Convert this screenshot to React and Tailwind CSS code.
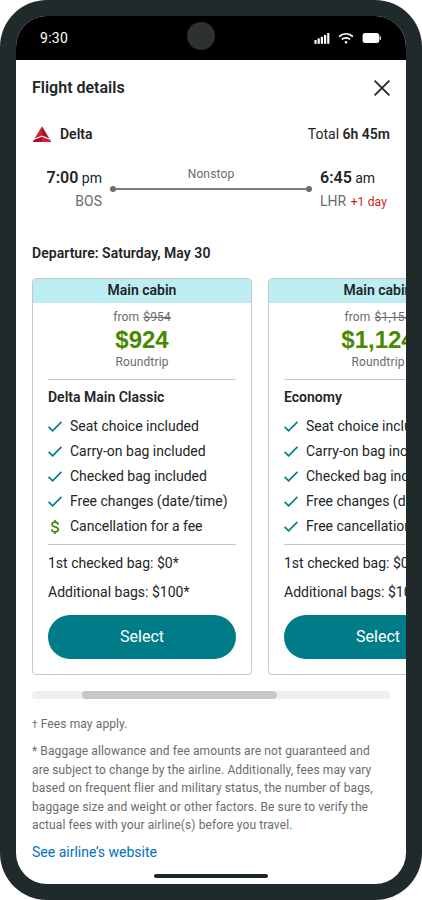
const FARES = [
  {
    id: 'main-classic',
    cabin: 'Main cabin',
    oldPrice: '$954',
    price: '$924',
    name: 'Delta Main Classic',
    features: [
      { text: 'Seat choice included' },
      { text: 'Carry-on bag included' },
      { text: 'Checked bag included' },
      { text: 'Free changes (date/time)' },
      { text: 'Cancellation for a fee', fee: true },
    ],
    bags: ['1st checked bag: $0*', 'Additional bags: $100*'],
  },
  {
    id: 'economy',
    cabin: 'Main cabin',
    oldPrice: '$1,154',
    price: '$1,124',
    name: 'Economy',
    features: [
      { text: 'Seat choice included' },
      { text: 'Carry-on bag included' },
      { text: 'Checked bag included' },
      { text: 'Free changes (date/time)' },
      { text: 'Free cancellation' },
    ],
    bags: ['1st checked bag: $0*', 'Additional bags: $100*'],
  },
]

function StatusBar() {
  return (
    <div className="relative flex h-11 shrink-0 items-center justify-between bg-black pl-6 pr-[25px] text-white">
      <span className="text-[14px] leading-5 tracking-[0.3px]">9:30</span>
      <span className="absolute left-[171px] top-[6px] size-7 rounded-full bg-[#2d3132]" />
      <div className="flex items-center">
        <svg className="h-3 w-4" viewBox="0 0 16 12" fill="currentColor">
          <rect x="0.4" y="8" width="2.2" height="3.8" />
          <rect x="3.6" y="6.4" width="2.2" height="5.4" />
          <rect x="6.8" y="4.8" width="2.2" height="7" />
          <rect x="10" y="3" width="2.2" height="8.8" />
          <rect x="13.2" y="1" width="2.2" height="10.8" />
        </svg>
        <svg className="ml-2 h-3 w-4" viewBox="0 0 16 12" fill="none" stroke="currentColor" strokeWidth="1.7">
          <path d="M1.1 4.6a9.8 9.8 0 0 1 13.8 0" />
          <path d="M3.9 7.5a5.8 5.8 0 0 1 8.2 0" />
          <circle cx="8" cy="10.2" r="1.2" fill="currentColor" stroke="none" />
        </svg>
        <svg className="ml-2 h-3 w-[19px]" viewBox="0 0 19 12" fill="currentColor">
          <rect x="0.6" y="1" width="16.6" height="10" rx="2.5" />
          <rect x="17.6" y="4.3" width="1.3" height="3.6" rx="0.6" />
        </svg>
      </div>
    </div>
  )
}

function DeltaLogo() {
  return (
    <svg className="h-4 w-5" viewBox="0 0 20 16">
      <path d="M10 0.3 10 9.6 2.6 12.6Z" fill="#e01933" />
      <path d="M10 0.3 10 9.6 17.4 12.6Z" fill="#9b1631" />
      <path d="M10 10.8 10 16 0.6 16 2 13.8Z" fill="#9b1631" />
      <path d="M10 10.8 10 16 19.4 16 18 13.8Z" fill="#e01933" />
    </svg>
  )
}

function FeatureIcon({ fee }) {
  if (fee) {
    return (
      <svg className="h-3.5 w-3.5" viewBox="0 0 14 14" fill="none" stroke="#4a8a0b" strokeWidth="1.7">
        <path d="M7 0v2.2M7 11.8V14M10.2 4.6C10.1 3 8.9 2.1 7.1 2.1 5.2 2.1 4 3 4 4.4c0 1.5 1.3 2 3.1 2.5 1.9.5 3.2 1.1 3.2 2.7 0 1.5-1.3 2.3-3.2 2.3-2 0-3.3-1-3.4-2.7" />
      </svg>
    )
  }
  return (
    <svg className="h-3.5 w-3.5" viewBox="0 0 14 14" fill="none" stroke="#007c89" strokeWidth="1.7">
      <path d="M0.6 6.9 4.6 10.8 13.5 1.9" />
    </svg>
  )
}

function FareCard({ fare }) {
  return (
    <div className="h-[397px] w-[220px] shrink-0 overflow-hidden rounded border border-[#c7c7c7]">
      <div className="h-6 bg-[#bbedf2] text-center text-[14px] font-semibold leading-[23px]">
        {fare.cabin}
      </div>
      <div className="px-[15px] pt-[5px]">
        <div className="border-b border-[#c7c7c7] pb-[8px] text-center text-[12px] text-[#6b6b6b]">
          <p className="leading-[18px] tracking-[0.14px]">
            from <s className="ml-px">{fare.oldPrice}</s>
          </p>
          <p className="font-['Liberation_Sans',sans-serif] text-[24px] font-bold leading-[28px] text-[#478900]">
            {fare.price}
          </p>
          <p className="leading-[17px] tracking-[0.14px]">Roundtrip</p>
        </div>
        <h3 className="pt-[7px] text-[14px] font-semibold leading-5">{fare.name}</h3>
        <ul className="mt-[7px] border-b border-[#c7c7c7] pb-[5px]">
          {fare.features.map((feature) => (
            <li key={feature.text} className="flex h-[25px] items-center gap-2 whitespace-nowrap text-[14px]">
              <FeatureIcon fee={feature.fee} />
              {feature.text}
            </li>
          ))}
        </ul>
        <div className="flex flex-col gap-[9px] pt-2 text-[14px] leading-5">
          {fare.bags.map((bag) => (
            <p key={bag}>{bag}</p>
          ))}
        </div>
        <button className="mt-[13px] h-11 w-full rounded-full bg-[#007c89] text-[16px] text-white">
          Select
        </button>
      </div>
    </div>
  )
}

function Itinerary() {
  return (
    <div className="flex h-[46px] justify-between">
      <div className="w-[70px] text-right">
        <p className="text-[14px] leading-6">
          <b className="text-[16px] font-semibold">7:00</b> pm
        </p>
        <p className="text-[14px] leading-[22px] text-[#6b6b6b]">BOS</p>
      </div>
      <div className="flex w-[202px] flex-col items-center">
        <span className="text-[12px] leading-4 tracking-[0.14px] text-[#6b6b6b]">Nonstop</span>
        <div className="mt-[4px] flex w-full items-center">
          <span className="size-[6px] rounded-full bg-[#6b6b6b]" />
          <span className="h-[2px] flex-1 bg-[#7a7a7a]" />
          <span className="size-[6px] rounded-full bg-[#6b6b6b]" />
        </div>
      </div>
      <div className="w-[70px] whitespace-nowrap">
        <p className="text-[14px] leading-6">
          <b className="text-[16px] font-semibold">6:45</b> am
        </p>
        <p className="text-[14px] leading-[22px] text-[#6b6b6b]">
          LHR <span className="ml-px text-[12px] tracking-[0.16px] text-[#d0211c]">+1 day</span>
        </p>
      </div>
    </div>
  )
}

export default function App() {
  return (
    <div className="h-[900px] w-[422px] rounded-[47px] bg-[#212a2b] p-4 font-[Roboto,sans-serif] text-[#222526]">
      <div className="relative flex h-full flex-col overflow-hidden rounded-[31px] bg-white">
        <StatusBar />

        <main className="flex flex-col px-4">
          <header className="flex h-14 items-center justify-between">
            <h1 className="text-[16px] font-semibold">Flight details</h1>
            <svg className="size-4" viewBox="0 0 16 16" fill="none" stroke="currentColor" strokeWidth="1.8">
              <path d="M0.6 0.6 15.4 15.4M15.4 0.6 0.6 15.4" />
            </svg>
          </header>

          <div className="mt-2 flex h-5 items-center justify-between text-[14px]">
            <div className="flex items-center gap-2">
              <DeltaLogo />
              <b className="font-semibold">Delta</b>
            </div>
            <p>
              Total <b className="font-semibold">6h 45m</b>
            </p>
          </div>

          <div className="mt-[22px]">
            <Itinerary />
          </div>

          <h2 className="mt-[31px] text-[14px] font-semibold leading-5 tracking-[0.04px]">Departure: Saturday, May 30</h2>

          <div className="-mr-4 mt-[15px] flex gap-4 overflow-hidden">
            {FARES.map((fare) => (
              <FareCard key={fare.id} fare={fare} />
            ))}
          </div>

          <div className="mt-4 h-2 rounded-full bg-[#efefef]">
            <div className="ml-[50px] h-full w-[195px] rounded-full bg-[#c7c7c7]" />
          </div>

          <div className="mt-4 whitespace-nowrap text-[12px] text-[#6b6b6b]">
            <p className="h-[18px] leading-[18px] tracking-[0.11px]">
              <span className="text-[10px]">†</span> Fees may apply.
            </p>
            <p className="mt-[9px] leading-[18.5px] tracking-[0.11px]">
              * Baggage allowance and fee amounts are not guaranteed and
              <br />
              are subject to change by the airline. Additionally, fees may vary
              <br />
              based on frequent flier and military status, the number of bags,
              <br />
              baggage size and weight or other factors. Be sure to verify the
              <br />
              actual fees with your airline(s) before you travel.
            </p>
          </div>
          <a className="mt-[7px] text-[14px] leading-5 text-[#0071bc]">See airline’s website</a>
        </main>

        <div className="absolute bottom-[6px] left-[138px] h-1 w-[114px] rounded-full bg-[#1c2826]" />
      </div>
    </div>
  )
}
